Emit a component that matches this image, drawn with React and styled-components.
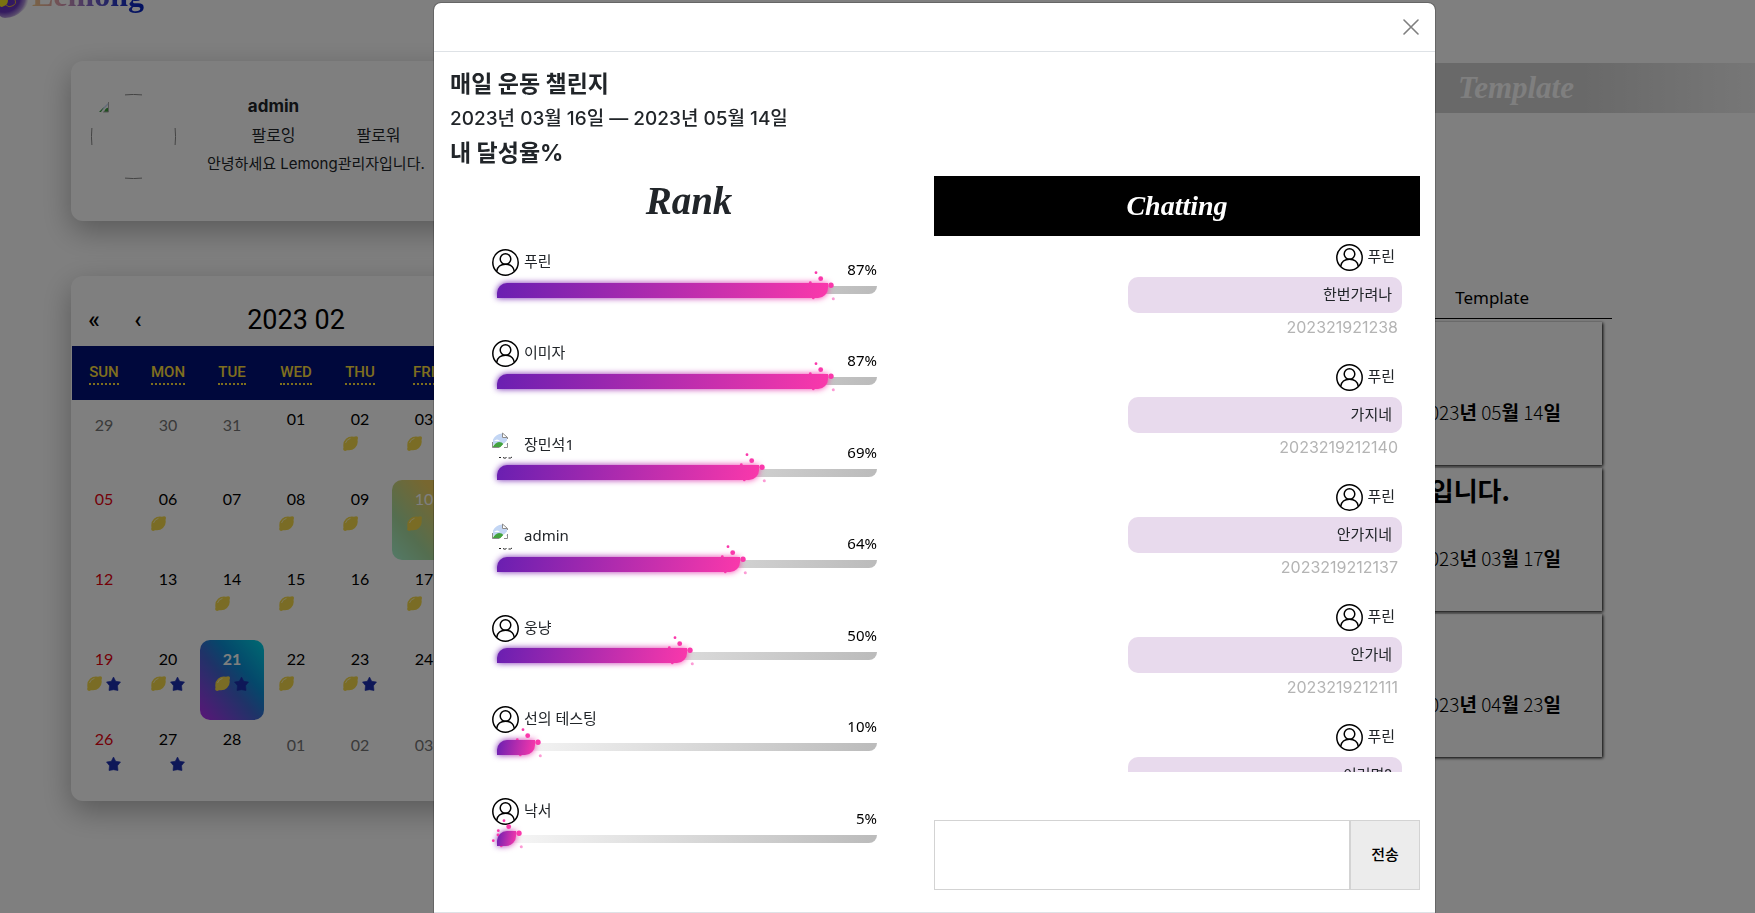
import React from "react";
import styled, { createGlobalStyle, css } from "styled-components";

const sans = `Inter, "Noto Sans CJK KR", sans-serif`;
const light = `"Noto Sans", "Noto Sans CJK KR", sans-serif`;
const script = `"Liberation Serif", serif`;

const GlobalStyle = createGlobalStyle`
  *, *::before, *::after { box-sizing: border-box; }
  body { margin: 0; background: #fff; color: #212529; font-family: ${sans}; font-size: 15px; line-height: 24px; }
  h1, h2, h3, h4, p, ul, ol { margin: 0; padding: 0; }
  ul, ol { list-style: none; }
  button, textarea { font: inherit; color: inherit; border: 0; background: none; padding: 0; }
`;

/* ---------- page behind the dialog ---------- */

const Page = styled.div`
  min-height: 100vh;
  overflow: hidden;
`;

const TopBar = styled.header`
  display: flex;
  align-items: flex-end;
  height: 18px;
`;

const LogoText = styled.a`
  margin-bottom: 3px;
  font-family: ${script};
  font-size: 32px;
  font-weight: 700;
  line-height: 40px;
  text-decoration: none;
  color: transparent;
  background: linear-gradient(90deg, #f5c98a, #e0a0b0 25%, #8a6ac8 50%, #2a3ac8 75%, #0020c0);
  background-clip: text;
`;

const Main = styled.main`
  display: flex;
  gap: 59px;
  padding: 43px 0 0 71px;
`;

const Side = styled.aside`
  display: flex;
  flex-direction: column;
  gap: 55px;
  flex: 0 0 450px;
`;

const Card = styled.section`
  border-radius: 12px;
  background: #fff;
  box-shadow: 0 10px 30px rgba(0, 0, 0, 0.3);
`;

const ProfileCard = styled(Card)`
  display: flex;
  align-items: flex-start;
  gap: 31px;
  height: 160px;
  padding: 33px 20px;
`;

const ProfileInfo = styled.div`
  white-space: nowrap;
`;

const ProfileGrid = styled.div`
  display: grid;
  grid-template-columns: 105px 105px;
  row-gap: 5px;
  justify-items: center;
  margin: 0 0 5px 14px;
  font-size: 16px;
`;

const ProfileName = styled.h2`
  grid-column: 1 / 2;
  font-size: 17px;
  line-height: 24px;
`;

const FollowLabel = styled.span`
  grid-row: 2;
`;

const CalendarCard = styled(Card)`
  padding: 18px 1px 1px;
`;

const CalendarNav = styled.div`
  display: flex;
  align-items: center;
  height: 52px;
  color: #000;
`;

const NavButton = styled.button`
  width: 44px;
  font-family: Roboto, sans-serif;
  font-size: 24px;
  font-weight: 500;
`;

const MonthButton = styled.button`
  flex: 1;
  font-family: Roboto, sans-serif;
  font-size: 27px;
`;

const Week = styled.div`
  display: grid;
  grid-template-columns: repeat(7, 64px);
`;

const WeekHead = styled(Week)`
  height: 54px;
  align-items: center;
  justify-items: center;
  background: #001078;
  color: #ffdf3c;

  abbr {
    font-family: Roboto, sans-serif;
    font-size: 15px;
    font-weight: 500;
    line-height: 22px;
    text-decoration: none;
    border-bottom: 2px dotted #ffdf3c;
  }
`;

const tiles = {
  active: css`
    background: linear-gradient(50deg, #a8f5d0, #a8dca0 30%, #f0cf60 75%);
    color: #fff;
  `,
  today: css`
    background: linear-gradient(50deg, #b52cf0, #3f66d0 45%, #0a8fd6 65%, #00d5e5);
    color: #fff;
    font-weight: 700;
  `,
  out: css`
    padding-top: 14px;
    color: #757575;
  `,
};

const Day = styled.button`
  display: flex;
  flex-direction: column;
  align-items: center;
  gap: 6px;
  height: 80px;
  padding-top: 8px;
  border-radius: 10px;
  font-family: Lato, sans-serif;
  font-size: 16px;
  line-height: 22px;
  color: ${(p) => (p.$sunday ? "#e8000f" : "#000")};
  ${(p) => tiles[p.$kind]}
`;

const Marks = styled.span`
  display: grid;
  grid-template-columns: 15px 15px;
  gap: 4px;
  height: 15px;
`;

const Content = styled.section`
  flex: 1;
  min-width: 0;
  padding-top: 2px;
`;

const Banner = styled.div`
  padding-right: 181px;
  background: linear-gradient(90deg, #d2d2d2 85%, #eee);
  text-align: right;
`;

const BannerTitle = styled.h2`
  font-family: ${script};
  font-style: italic;
  font-size: 31px;
  line-height: 50px;
  color: #fff;
`;

const TemplatePanel = styled.div`
  margin: 167px 143px 0 0;
  color: #000;
`;

const PanelHead = styled.h3`
  padding: 0 83px 2px 0;
  border-bottom: 1px solid #000;
  font-family: ${light};
  font-weight: 400;
  font-size: 17px;
  line-height: 36px;
  text-align: right;
`;

const TemplateList = styled.ul`
  display: grid;
  gap: 3px;
  margin: 3px 10px 0 0;
`;

const TemplateItem = styled.li`
  display: grid;
  grid-template-rows: 36px 1fr;
  justify-items: end;
  height: 143px;
  padding-right: 41px;
  box-shadow: 1px 1px 3px #000;
`;

const ItemTitle = styled.h4`
  padding-right: 51px;
  font-family: "Noto Sans CJK KR", sans-serif;
  font-size: 26px;
  line-height: 44px;
`;

const ItemDate = styled.p`
  align-self: center;
  font-family: "Noto Sans CJK KR", sans-serif;
  font-size: 19px;
  font-weight: 300;

  b { font-weight: 700; }
`;

/* ---------- dialog ---------- */

const Backdrop = styled.div`
  position: fixed;
  inset: 0;
  background: rgba(0, 0, 0, 0.5);
`;

const Overlay = styled.div`
  position: fixed;
  inset: 0;
  overflow-y: auto;
  scrollbar-width: none;
  padding: 2px 0 28px 114px;
`;

const Dialog = styled.div`
  max-width: 1003px;
  margin: 0 auto;
  border: 1px solid rgba(0, 0, 0, 0.2);
  border-radius: 8px;
  background: #fff;
  background-clip: padding-box;
`;

const DialogHeader = styled.header`
  display: flex;
  justify-content: flex-end;
  align-items: center;
  height: 49px;
  padding-right: 16px;
  border-bottom: 1px solid #dee2e6;
`;

const CloseButton = styled.button`
  display: flex;
  color: #7f7f7f;
`;

const DialogBody = styled.div`
  padding: 18px 15px 22px 16px;
`;

const DialogFooter = styled.footer`
  height: 60px;
  border-top: 1px solid #dee2e6;
`;

const Summary = styled.div`
  display: grid;
  gap: 8px;
  margin-bottom: 8px;
`;

const Title = styled.h1`
  font-size: 23px;
  line-height: 29px;
`;

const Period = styled.p`
  font-size: 19px;
  font-weight: 500;
  line-height: 24px;
`;

const Columns = styled.div`
  display: grid;
  grid-template-columns: minmax(0, 1fr) 486px;
  gap: 6px;
`;

const RankTitle = styled.h2`
  font-family: ${script};
  font-style: italic;
  font-size: 39px;
  line-height: 50px;
  text-align: center;
`;

const RankList = styled.ol`
  display: grid;
  grid-auto-rows: 1fr;
  min-height: 640px;
  margin-top: 23px;
  padding: 0 51px 0 42px;
`;

const RankHead = styled.div`
  display: flex;
  gap: 5px;
  height: 32px;
`;

const UserName = styled.span`
  font-family: ${light};
  font-size: 15px;
  line-height: 24px;
`;

const Percent = styled.span`
  align-self: flex-end;
  margin-left: auto;
  font-family: ${light};
  color: #000;
`;

const Rail = styled.div`
  display: flex;
  align-items: center;
  height: 8px;
  margin: 5px 0 0 5px;
  border-radius: 8px 0 8px 0;
  background: linear-gradient(100deg, #f8f8f8, #bbb);
`;

const Fill = styled.div`
  position: relative;
  height: 15px;

  &::before, &::after {
    content: "";
    position: absolute;
    inset: 0;
    border-radius: 10px 0 10px 0;
    background: linear-gradient(100deg, #6a1fb1, #fa38ab);
  }
  &::before { filter: blur(3px); }
`;

const SparkArt = styled.svg`
  position: absolute;
  right: -8px;
  top: -13px;
`;

const ChatColumn = styled.section`
  display: flex;
  flex-direction: column;
`;

const ChatTitle = styled.h2`
  background: #000;
  color: #fff;
  font-family: ${script};
  font-style: italic;
  font-size: 28px;
  line-height: 60px;
  text-align: center;
`;

const ChatList = styled.ul`
  height: 536px;
  overflow-y: auto;
  scrollbar-width: none;
  padding: 8px 18px 0 0;
`;

const Message = styled.li`
  display: flex;
  flex-direction: column;
  align-items: flex-end;
  margin-bottom: 25px;
`;

const Sender = styled.div`
  display: flex;
  gap: 4px;
  height: 27px;
  padding-right: 7px;
`;

const Bubble = styled.p`
  width: 274px;
  margin: 6px 0 2px;
  padding: 0 10px;
  border-radius: 10px;
  background: #e8daed;
  line-height: 36px;
  text-align: right;
`;

const Time = styled.time`
  padding-right: 4px;
  color: #b4b4b4;
  font-size: 16px;
`;

const ChatForm = styled.form`
  display: flex;
  height: 70px;
  margin-top: 48px;
`;

const ChatInput = styled.textarea`
  flex: 1;
  padding: 8px;
  border: 1px solid #d3d3d3;
  border-radius: 0;
  resize: none;
`;

const SendButton = styled.button`
  width: 70px;
  border: 1px solid #d3d3d3;
  background: #ececec;
  color: #000;
  font-weight: 500;
`;

/* ---------- drawings ---------- */

const LogoMark = () => (
  <svg width="32" height="18" viewBox="0 0 32 18" aria-hidden="true">
    <defs>
      <radialGradient id="splash" cx="4" cy="-4" r="25" gradientUnits="userSpaceOnUse">
        <stop offset="0" stopColor="#5a28c8" />
        <stop offset="0.65" stopColor="#6a38c0" />
        <stop offset="0.85" stopColor="#8a60c8" stopOpacity="0.7" />
        <stop offset="1" stopColor="#a080d0" stopOpacity="0" />
      </radialGradient>
    </defs>
    <path d="M0 0H30Q27 7 22 11Q15 18 5 18Q2 18 0 16Z" fill="url(#splash)" />
    <path d="M0 0H8Q8 5 4 6Q1 8 0 6Z" fill="#f5e420" />
    <path d="M15 0Q17 4 12 6Q9 8 6 5" fill="none" stroke="#e0b040" />
  </svg>
);

const ProfilePlaceholder = () => (
  <svg width="85" height="85" viewBox="0 0 85 85" role="img" aria-label="profile">
    <path d="M34 .9Q42.500 0 51 .9M34 84.100Q42.500 85 51 84.100M.9 34Q0 42.500.9 51M84.100 34Q85 42.500 84.100 51" fill="none" stroke="#888" />
    <path d="M8 18L18 8V10L11 17Z" fill="#c6d8f2" />
    <path d="M8 18L13 13L10 18Z M13 18Q15 13 18 14V18Z" fill="#3f9f3f" />
    <path d="M17.500 8V18H12" fill="none" stroke="#aaa" />
  </svg>
);

const Avatar = () => (
  <svg width="27" height="27" viewBox="0 0 27 27" fill="none" stroke="#000" strokeWidth="1.500" aria-hidden="true">
    <circle cx="13.500" cy="13.500" r="12.700" />
    <circle cx="13.500" cy="10" r="5.300" />
    <path d="M4.700 22.300C5.500 17.600 9.100 15.300 13.500 15.300S21.500 17.600 22.300 22.300" />
  </svg>
);

const BrokenAvatar = () => (
  <svg width="27" height="27" viewBox="0 0 27 27" aria-hidden="true">
    <path d="M1 7.500Q4 2 10 1.500V6H15V13Q10 9 1 13Z" fill="#c3d6f4" />
    <path d="M2 9Q5 6 8 9Z" fill="#fff" />
    <path d="M0.500 15.500Q3 10.500 7 10Q10 10 11.500 12L8.500 15.500Z" fill="#43a33f" />
    <path d="M7.500 16L15.500 8V11L11 16Z" fill="#fff" />
    <path d="M10.500 1V5.500H15.500V7M10.500 1L15.500 5.500M15.500 11V15.500H12M0.500 10V15.500H7" fill="none" stroke="#8c8c8c" />
    <path d="M7 25.500H9M11 25.500Q13 27 14.500 25.500M16.500 26H18.500L20 25" fill="none" stroke="#222" />
  </svg>
);

const Sparks = () => (
  <SparkArt width="38" height="34" viewBox="0 0 38 34" fill="#fa38ab" aria-hidden="true">
    <circle cx="18" cy="2.700" r="1.400" />
    <circle cx="22.700" cy="8.700" r="2.400" />
    <circle cx="33" cy="15.300" r="2.700" />
    <circle cx="12.300" cy="12.700" r="1.400" />
    <circle cx="12" cy="17" r="1.400" />
    <circle cx="7.300" cy="22.700" r="1.400" />
    <circle cx="15.300" cy="28" r="1.300" />
    <circle cx="35.300" cy="28.700" r="1.500" opacity="0.5" />
  </SparkArt>
);

const Lemon = () => (
  <svg width="15" height="15" viewBox="0 0 15 15" aria-hidden="true">
    <path d="M1 14.500Q-.3 13.500.5 11.500Q-.5 6 3 2.800Q6.500-.2 11 .8Q13.500-.4 14.600.8Q15.300 2 14.500 4Q15.500 9 12 12Q9 15 4 14.200Q2 15.500 1 14.500Z" fill="#f5d94a" />
    <path d="M2.500 7Q3.500 3.500 7.500 2.300" fill="none" stroke="#fff6b8" strokeWidth="1" />
  </svg>
);

const Star = () => (
  <svg width="15" height="15" viewBox="0 0 15 15" aria-hidden="true">
    <path d="M7.500 1L9.700 5.300L14.500 6L11.500 9.700L12 14.500L7.500 13.700L3 14.500L3.500 9.700L.5 6L5.300 5.300Z" fill="#1c2fb0" stroke="#1c2fb0" strokeLinejoin="round" strokeWidth=".6" />
  </svg>
);

const CloseIcon = () => (
  <svg width="16" height="16" viewBox="0 0 16 16" stroke="currentColor" strokeWidth="1.600" strokeLinecap="round" aria-hidden="true">
    <path d="M1 1L15 15M15 1L1 15" />
  </svg>
);

/* ---------- data ---------- */

const weekdays = ["SUN", "MON", "TUE", "WED", "THU", "FRI", "SAT"];

// [label, marks (L = lemon, S = star), kind]
const days = [
  ["29", "", "out"], ["30", "", "out"], ["31", "", "out"], ["01", ""], ["02", "L"], ["03", "L"], ["04", ""],
  ["05", ""], ["06", "L"], ["07", ""], ["08", "L"], ["09", "L"], ["10", "L", "active"], ["11", ""],
  ["12", ""], ["13", ""], ["14", "L"], ["15", "L"], ["16", ""], ["17", "L"], ["18", ""],
  ["19", "LS"], ["20", "LS"], ["21", "LS", "today"], ["22", "L"], ["23", "LS"], ["24", ""], ["25", ""],
  ["26", "S"], ["27", "S"], ["28", ""], ["01", "", "out"], ["02", "", "out"], ["03", "", "out"], ["04", "", "out"],
];

const templates = [
  { title: "", date: ["05", "14"] },
  { title: "입니다.", date: ["03", "17"] },
  { title: "", date: ["04", "23"] },
];

const ranks = [
  { name: "푸린", percent: 87 },
  { name: "이미자", percent: 87 },
  { name: "장민석1", percent: 69, broken: true },
  { name: "admin", percent: 64, broken: true },
  { name: "웅냥", percent: 50 },
  { name: "선의 테스팅", percent: 10 },
  { name: "낙서", percent: 5 },
];

const messages = [
  { text: "한번가려나", time: "202321921238" },
  { text: "가지네", time: "2023219212140" },
  { text: "안가지네", time: "2023219212137" },
  { text: "안가네", time: "2023219212111" },
  { text: "이러면?", time: "" },
];

/* ---------- sections ---------- */

const Profile = () => (
  <ProfileCard>
    <ProfilePlaceholder />
    <ProfileInfo>
      <ProfileGrid>
        <ProfileName>admin</ProfileName>
        <FollowLabel>팔로잉</FollowLabel>
        <FollowLabel>팔로워</FollowLabel>
      </ProfileGrid>
      <p>안녕하세요 Lemong관리자입니다.</p>
    </ProfileInfo>
  </ProfileCard>
);

const Calendar = () => (
  <CalendarCard>
    <CalendarNav>
      <NavButton type="button">«</NavButton>
      <NavButton type="button">‹</NavButton>
      <MonthButton type="button">2023 02</MonthButton>
      <NavButton type="button">›</NavButton>
      <NavButton type="button">»</NavButton>
    </CalendarNav>
    <WeekHead>
      {weekdays.map((d) => (
        <abbr key={d}>{d}</abbr>
      ))}
    </WeekHead>
    <Week>
      {days.map(([label, marks, kind], i) => (
        <Day key={i} type="button" $kind={kind} $sunday={i % 7 === 0}>
          {label}
          {marks && (
            <Marks>
              {marks.includes("L") ? <Lemon /> : <span />}
              {marks.includes("S") && <Star />}
            </Marks>
          )}
        </Day>
      ))}
    </Week>
  </CalendarCard>
);

const Templates = () => (
  <Content>
    <Banner>
      <BannerTitle>Template</BannerTitle>
    </Banner>
    <TemplatePanel>
      <PanelHead>Template</PanelHead>
      <TemplateList>
        {templates.map(({ title, date: [month, day] }) => (
          <TemplateItem key={month}>
            <ItemTitle>{title}</ItemTitle>
            <ItemDate>
              2023<b>년</b> {month}<b>월</b> {day}<b>일</b>
            </ItemDate>
          </TemplateItem>
        ))}
      </TemplateList>
    </TemplatePanel>
  </Content>
);

const Ranking = () => (
  <section>
    <RankTitle>Rank</RankTitle>
    <RankList>
      {ranks.map(({ name, percent, broken }) => (
        <li key={name}>
          <RankHead>
            {broken ? <BrokenAvatar /> : <Avatar />}
            <UserName>{name}</UserName>
            <Percent>{percent}%</Percent>
          </RankHead>
          <Rail>
            <Fill style={{ width: `${percent}%` }}>
              <Sparks />
            </Fill>
          </Rail>
        </li>
      ))}
    </RankList>
  </section>
);

const Chat = () => (
  <ChatColumn>
    <ChatTitle>Chatting</ChatTitle>
    <ChatList>
      {messages.map(({ text, time }) => (
        <Message key={text}>
          <Sender>
            <Avatar />
            <UserName>푸린</UserName>
          </Sender>
          <Bubble>{text}</Bubble>
          {time && <Time>{time}</Time>}
        </Message>
      ))}
    </ChatList>
    <ChatForm>
      <ChatInput aria-label="메시지" />
      <SendButton type="button">전송</SendButton>
    </ChatForm>
  </ChatColumn>
);

export default function App() {
  return (
    <>
      <GlobalStyle />
      <Page>
        <TopBar>
          <LogoMark />
          <LogoText href="#">Lemong</LogoText>
        </TopBar>
        <Main>
          <Side>
            <Profile />
            <Calendar />
          </Side>
          <Templates />
        </Main>
      </Page>
      <Backdrop />
      <Overlay>
        <Dialog role="dialog" aria-modal="true" aria-labelledby="challenge-title">
          <DialogHeader>
            <CloseButton type="button" aria-label="닫기">
              <CloseIcon />
            </CloseButton>
          </DialogHeader>
          <DialogBody>
            <Summary>
              <Title id="challenge-title">매일 운동 챌린지</Title>
              <Period>2023년 03월 16일 — 2023년 05월 14일</Period>
              <Title as="h2">내 달성율%</Title>
            </Summary>
            <Columns>
              <Ranking />
              <Chat />
            </Columns>
          </DialogBody>
          <DialogFooter />
        </Dialog>
      </Overlay>
    </>
  );
}
